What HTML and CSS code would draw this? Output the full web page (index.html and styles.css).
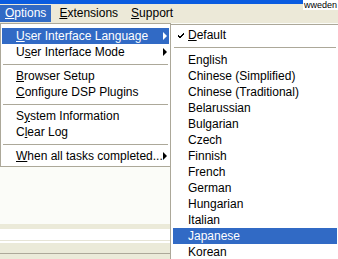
FILE: index.html
```html
<!DOCTYPE html>
<html lang="en">
<head>
    <meta charset="UTF-8">
    <meta name="viewport" content="width=device-width, initial-scale=1.0">
    <title>Options Menu</title>
    <link rel="stylesheet" href="styles.css">
</head>
<body>

    <div class="window">
        <!-- Title strip -->
        <div class="titlebar">
            <span class="title-tag">wweden</span>
        </div>

        <!-- Menu bar -->
        <div class="menubar">
            <span class="menubar-item active"><u>O</u>ptions</span>
            <span class="menubar-item"><u>E</u>xtensions</span>
            <span class="menubar-item"><u>S</u>upport</span>
        </div>

        <!-- Application area behind the menus -->
        <div class="workspace">
            <div class="canvas"></div>
            <div class="band"></div>
            <div class="field"></div>
            <div class="toolbar"></div>
            <div class="statusbar"></div>
        </div>

        <!-- Options dropdown -->
        <div class="menu dropdown">
            <div class="menu-item selected has-sub"><u>U</u>ser Interface Language</div>
            <div class="menu-item has-sub">U<u>s</u>er Interface Mode</div>
            <div class="menu-sep"></div>
            <div class="menu-item"><u>B</u>rowser Setup</div>
            <div class="menu-item"><u>C</u>onfigure DSP Plugins</div>
            <div class="menu-sep"></div>
            <div class="menu-item">S<u>y</u>stem Information</div>
            <div class="menu-item">C<u>l</u>ear Log</div>
            <div class="menu-sep"></div>
            <div class="menu-item has-sub"><u>W</u>hen all tasks completed...</div>
        </div>

        <!-- Language submenu -->
        <div class="menu submenu">
            <div class="menu-item checked">
                <svg class="check" width="7" height="7" viewBox="0 0 7 7">
                    <path d="M0 3 L2 5 L6 1 M0 4 L2 6 L6 2" stroke="#000" stroke-width="1" fill="none"/>
                </svg>
                <u>D</u>efault
            </div>
            <div class="menu-sep"></div>
            <div class="menu-item">English</div>
            <div class="menu-item">Chinese (Simplified)</div>
            <div class="menu-item">Chinese (Traditional)</div>
            <div class="menu-item">Belarussian</div>
            <div class="menu-item">Bulgarian</div>
            <div class="menu-item">Czech</div>
            <div class="menu-item">Finnish</div>
            <div class="menu-item">French</div>
            <div class="menu-item">German</div>
            <div class="menu-item">Hungarian</div>
            <div class="menu-item">Italian</div>
            <div class="menu-item selected">Japanese</div>
            <div class="menu-item">Korean</div>
        </div>
    </div>

</body>
</html>
```

FILE: styles.css
```css
/* General Styles */
body {
    margin: 0;
    font-family: 'Liberation Sans', Arial, sans-serif;
    font-size: 12px;
    color: #000;
    background: #ece9d8;
    overflow: hidden;
}

u {
    text-decoration: underline;
    text-underline-offset: 1px;
}

.window {
    position: relative;
    width: 338px;
    height: 259px;
    display: flex;
    flex-direction: column;
}

/* Title strip */
.titlebar {
    height: 4px;
    background: #0a5ce0;
}

.title-tag {
    position: absolute;
    top: 0;
    right: 0;
    width: 34px;
    height: 10px;
    background: #fff;
    font-size: 9px;
    line-height: 11px;
    padding-left: 1px;
    white-space: nowrap;
}

/* Menu bar */
.menubar {
    height: 19px;
    display: flex;
    gap: 3px;
    background: #ece9d8;
}

.menubar-item {
    padding: 0 5px;
    line-height: 17px;
    height: 17px;
    margin-top: 1px;
}

.menubar-item.active {
    background: #316ac5;
    color: #fff;
}

/* Area behind the menus */
.workspace {
    flex: 1;
    display: flex;
    flex-direction: column;
}

.canvas {
    flex: 1;
    background: #fbfcf8;
}

.band {
    height: 5px;
    background: #ebead9;
}

.field {
    height: 11px;
    background: #fff;
    border-bottom: 1px solid #e6e4d6;
}

.toolbar {
    height: 13px;
    background: #ebead9;
    border-top: 2px solid #fff;
    border-bottom: 1px solid #aca899;
    box-sizing: border-box;
}

.statusbar {
    height: 5px;
    background: #ebead9;
}

/* Menus */
.menu {
    position: absolute;
    background: #fff;
    border: 1px solid #aca899;
    box-sizing: border-box;
}

.dropdown {
    left: 0;
    top: 23px;
    width: 171px;
    padding: 4px 1px 2px 1px;
}

.submenu {
    left: 170px;
    top: 24px;
    width: 170px;
    padding: 2px 2px;
}

.menu-item {
    position: relative;
    height: 16px;
    line-height: 16px;
    white-space: nowrap;
}

.dropdown .menu-item {
    padding-left: 14px;
}

.submenu .menu-item {
    padding-left: 15px;
}

.menu-item.selected {
    background: #316ac5;
    color: #fff;
}

.menu-item.has-sub::after {
    content: "";
    position: absolute;
    right: 2px;
    top: 4px;
    border-left: 4px solid #000;
    border-top: 4px solid transparent;
    border-bottom: 4px solid transparent;
}

.menu-item.selected.has-sub::after {
    border-left-color: #fff;
}

.check {
    position: absolute;
    left: 5px;
    top: 5px;
}

.menu-sep {
    height: 8px;
    display: flex;
    align-items: center;
    padding: 0 1px;
}

.menu-sep::before {
    content: "";
    flex: 1;
    height: 1px;
    background: #aca899;
}

.submenu .menu-sep {
    height: 9px;
}
```
